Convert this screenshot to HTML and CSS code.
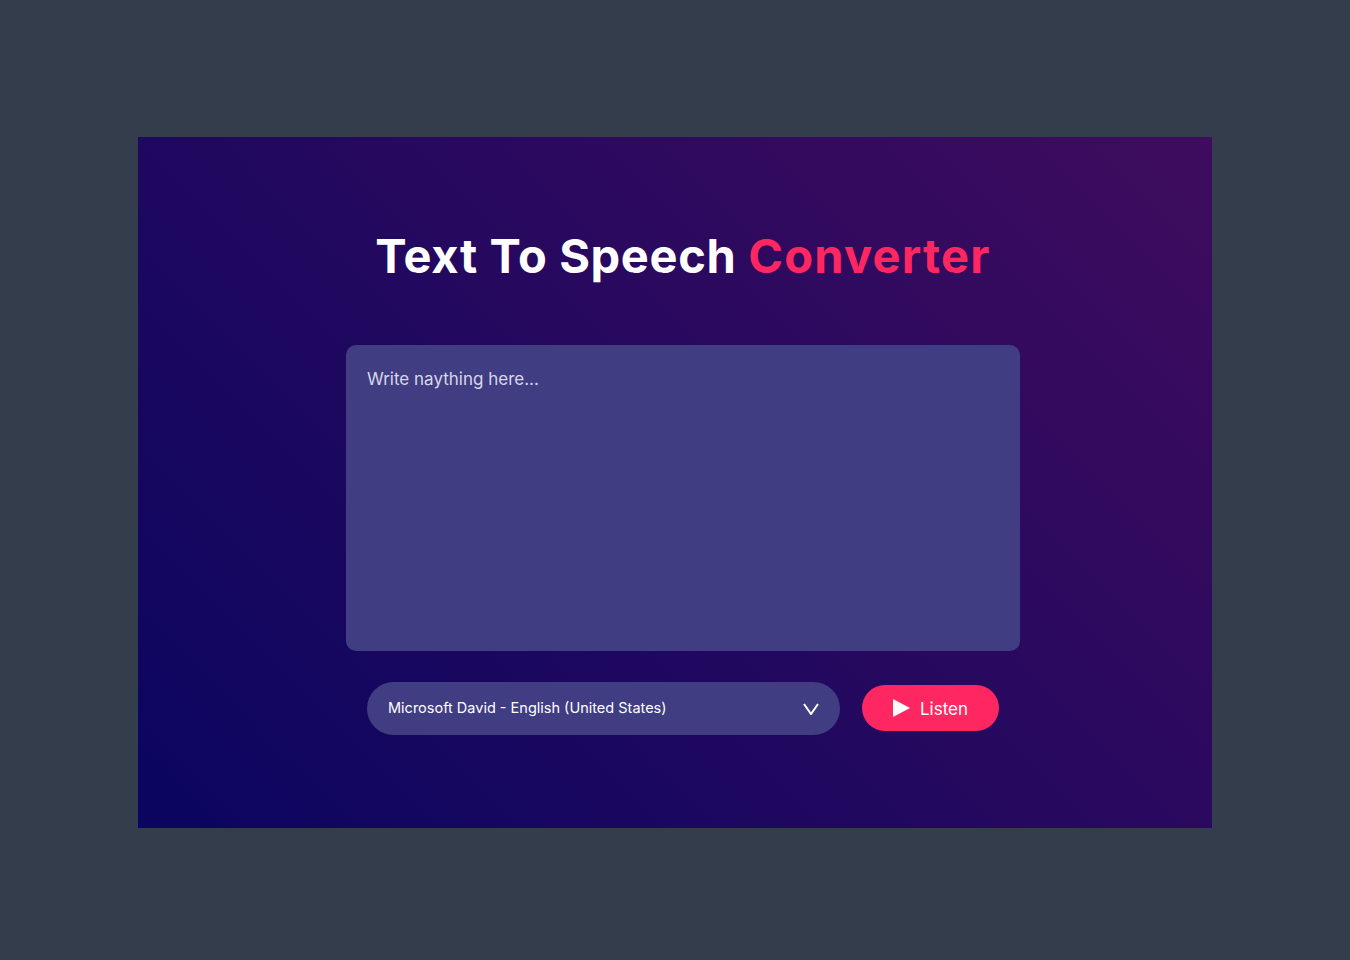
FILE: index.html
```html
<!DOCTYPE html>
<html lang="en">
<head>
    <meta charset="UTF-8">
    <meta name="viewport" content="width=device-width, initial-scale=1.0">
    <title>Text To Speech Converter</title>
    <link rel="stylesheet" href="styles.css">
</head>
<body>
    <div class="hero">
        <div class="converter">
            <h1 class="title">Text To Speech <span class="accent">Converter</span></h1>
            <textarea class="text-input" placeholder="Write naything here..."></textarea>
            <div class="controls">
                <div class="voice-select">
                    <span class="voice-name">Microsoft David - English (United States)</span>
                    <svg class="chevron" xmlns="http://www.w3.org/2000/svg" viewBox="0 0 16 12"><path d="M1 1l7 10 7-10" fill="none" stroke="#fff" stroke-width="2"/></svg>
                </div>
                <button class="listen-button">
                    <svg class="play-icon" xmlns="http://www.w3.org/2000/svg" viewBox="0 0 17 18"><path d="M0 0l17 9-17 9z" fill="#fff"/></svg>
                    <span class="listen-label">Listen</span>
                </button>
            </div>
        </div>
    </div>
</body>
</html>
```

FILE: styles.css
```css
* { box-sizing: border-box; }
body { margin: 0; height: 960px; padding-top: 137px; background: #343d4b; font-family: 'Inter', 'Liberation Sans', sans-serif; }
.hero { width: 1074px; height: 691px; margin: 0 auto; padding: 88px 192px 0 208px; background: linear-gradient(45deg, #0a0560, #3f0c5e); }
.converter { display: flex; flex-direction: column; align-items: center; }
.title { margin: 0 0 59px; height: 61px; color: #fff; font-size: 47px; line-height: 61px; font-weight: 700; white-space: nowrap; letter-spacing: 0.65px; }
.accent { color: #ff2761; letter-spacing: 1.25px; }
.text-input { display: block; width: 674px; height: 306px; padding: 22px 21px; border: none; border-radius: 10px; background: #403d82; color: #fff; font-family: inherit; font-size: 17px; line-height: 24px; resize: none; outline: none; }
.text-input::placeholder { color: #d8d6e8; opacity: 1; }
.controls { display: flex; align-items: flex-start; gap: 22px; margin-top: 31px; }
.voice-select { display: flex; align-items: center; justify-content: space-between; width: 473px; height: 53px; padding: 0 21px; border-radius: 27px; background: #403d82; color: #fff; font-size: 14.5px; }
.voice-name { margin-top: -2px; }
.chevron { width: 16px; height: 12px; }
.listen-button { display: flex; align-items: center; justify-content: center; gap: 10px; width: 137px; height: 46px; margin-top: 3px; border: none; border-radius: 23px; background: #ff2761; color: #fff; font-family: inherit; font-size: 17px; }
.listen-label { margin-top: 2px; }
.play-icon { width: 17px; height: 18px; }
```
